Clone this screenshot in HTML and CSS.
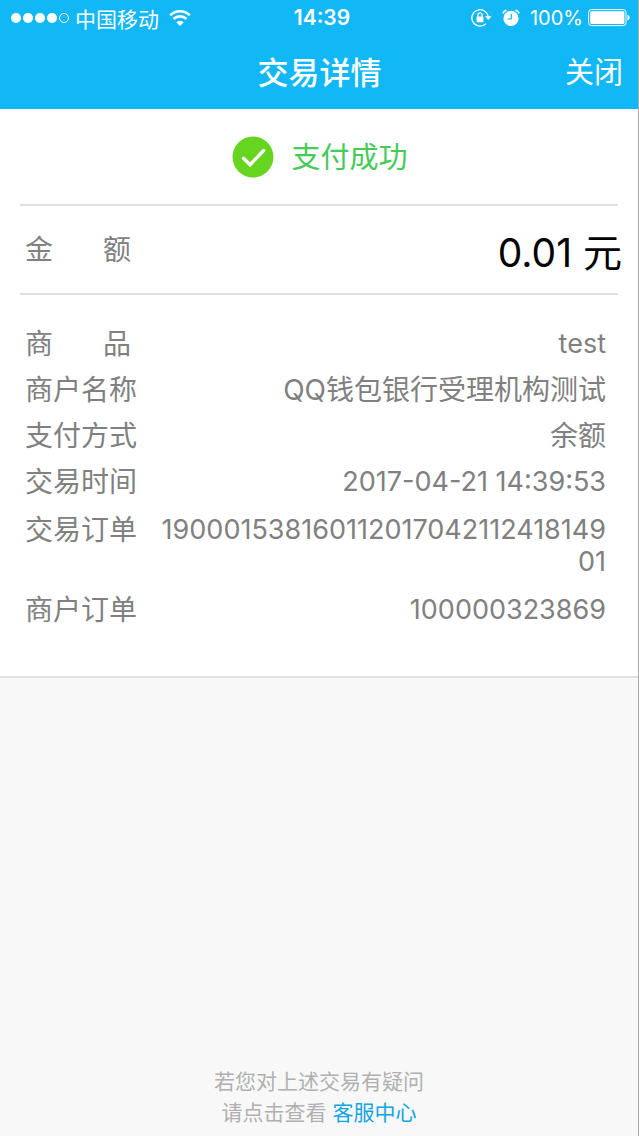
FILE: index.html
```html
<!doctype html>
<html lang="zh-CN">
  <head>
    <meta charset="UTF-8" />
    <meta name="viewport" content="width=device-width, initial-scale=1.0" />
    <title>交易详情</title>
    <link rel="stylesheet" href="styles.css">
  </head>
  <body>
    <header class="header">
      <!-- 状态栏 -->
      <div class="status-bar">
        <div class="status-left">
          <svg class="icon-signal" width="60" height="12" viewBox="0 0 60 12" fill="#fff">
            <circle cx="6" cy="6" r="5" />
            <circle cx="18" cy="6" r="5" />
            <circle cx="30" cy="6" r="5" />
            <circle cx="42" cy="6" r="5" />
            <circle cx="54" cy="6" r="4.5" fill="none" stroke="#fff" />
          </svg>
          <span class="carrier">中国移动</span>
          <svg class="icon-wifi" width="22" height="18" viewBox="0 0 22 18">
            <path d="M1.2 6.2a14 14 0 0 1 19.6 0M4.5 10a9.4 9.4 0 0 1 13 0" fill="none" stroke="#fff" stroke-width="2.6" />
            <path d="M7.3 13.2a5.3 5.3 0 0 1 7.4 0L11 17z" fill="#fff" />
          </svg>
        </div>
        <span class="status-time">14:39</span>
        <div class="status-right">
          <svg class="icon-lock" width="21" height="20" viewBox="0 0 21 20">
            <path d="M15 15.6A8.2 8.2 0 1 1 17.2 9" fill="none" stroke="#fff" stroke-width="1.3" />
            <path d="M14 8.2h6.5L17.3 12z" fill="#fff" />
            <rect x="5.6" y="8.4" width="6.8" height="5.8" rx=".6" fill="#fff" />
            <path d="M6.9 9V7a2.1 2.1 0 0 1 4.2 0V9" fill="none" stroke="#fff" stroke-width="1.3" />
          </svg>
          <svg class="icon-alarm" width="18" height="18" viewBox="0 0 18 18">
            <circle cx="9" cy="9.4" r="7.6" fill="#fff" />
            <path d="M.8 4.4A9 9 0 0 1 4.4 1M13.6 1A9 9 0 0 1 17.2 4.4" fill="none" stroke="#fff" stroke-width="1.6" />
            <path d="M9.3 4.8v5.2H5.4" fill="none" stroke="#12b7f5" stroke-width="1.2" />
          </svg>
          <span class="battery-text">100%</span>
          <svg class="icon-battery" width="42" height="18" viewBox="0 0 42 18">
            <rect x=".6" y=".6" width="37.4" height="16" rx="2.8" fill="none" stroke="#fff" stroke-width="1" />
            <rect x="2.2" y="2.2" width="34.2" height="12.8" rx="1.4" fill="#fff" />
            <path d="M39.4 5.8c3 .6 3 5 0 5.6z" fill="#fff" />
          </svg>
        </div>
      </div>

      <!-- 导航栏 -->
      <div class="nav-bar">
        <h1 class="nav-title">交易详情</h1>
        <button class="nav-close" type="button">关闭</button>
      </div>
    </header>

    <main class="detail">
      <!-- 支付结果 -->
      <div class="result">
        <svg class="result-icon" width="42" height="42" viewBox="0 0 42 42">
          <circle cx="21" cy="21" r="20.5" fill="#66d520" />
          <path d="M11.5 22.2l6.6 6.5L31.6 14.5" fill="none" stroke="#fff" stroke-width="3.4" stroke-linecap="round" />
        </svg>
        <p class="result-text">支付成功</p>
      </div>

      <!-- 金额 -->
      <dl class="amount">
        <dt class="label label-wide">金 额</dt>
        <dd class="amount-value">0.01 元</dd>
      </dl>

      <!-- 交易信息 -->
      <dl class="info">
        <div class="row">
          <dt class="label label-wide">商 品</dt>
          <dd class="value">test</dd>
        </div>
        <div class="row">
          <dt class="label">商户名称</dt>
          <dd class="value value-text">QQ钱包银行受理机构测试</dd>
        </div>
        <div class="row">
          <dt class="label">支付方式</dt>
          <dd class="value value-text">余额</dd>
        </div>
        <div class="row">
          <dt class="label">交易时间</dt>
          <dd class="value">2017-04-21 14:39:53</dd>
        </div>
        <div class="row row-order">
          <dt class="label">交易订单</dt>
          <dd class="value">19000153816011201704211241814901</dd>
        </div>
        <div class="row">
          <dt class="label">商户订单</dt>
          <dd class="value">100000323869</dd>
        </div>
      </dl>
    </main>

    <footer class="footer">
      <p>若您对上述交易有疑问</p>
      <p>请点击查看 <a class="footer-link" href="#">客服中心</a></p>
    </footer>
  </body>
</html>
```
FILE: styles.css
```css
* {
  margin: 0;
  padding: 0;
  box-sizing: border-box;
}

body {
  display: flex;
  flex-direction: column;
  min-height: 100vh;
  background: #f8f8f8;
  border-right: 1px solid #a9a9a9;
  font-family: Inter, "Noto Sans CJK SC", sans-serif;
  color: #808080;
}

/* 顶部 */
.header {
  background: #12b7f5;
  color: #fff;
}

.status-bar {
  display: grid;
  grid-template-columns: 1fr auto 1fr;
  align-items: center;
  height: 35px;
  padding: 0 8px 0 10px;
  font-size: 20px;
}

.status-left,
.status-right {
  display: flex;
  align-items: center;
}

.status-right {
  justify-content: flex-end;
}

.carrier {
  margin: 0 10px 0 5px;
  font-size: 21px;
}

.status-time {
  padding-left: 4px;
  font-size: 21px;
  font-weight: 600;
}

.icon-alarm {
  margin: 0 10px 0 10px;
}

.battery-text {
  margin-right: 5px;
}

.nav-bar {
  display: grid;
  grid-template-columns: 1fr auto 1fr;
  align-items: center;
  height: 74px;
  padding: 0 15px 4px 16px;
}

.nav-title {
  grid-column: 2;
  font-size: 31px;
  font-weight: 500;
}

.nav-close {
  justify-self: end;
  border: 0;
  background: none;
  color: #fff;
  font-family: inherit;
  font-size: 29px;
}

/* 交易内容 */
.detail {
  background: #fff;
  border-bottom: 2px solid #e0e0e0;
}

.result {
  display: flex;
  align-items: center;
  justify-content: center;
  gap: 17px;
  height: 95px;
  padding-left: 2px;
}

.result-text {
  padding-bottom: 3px;
  color: #44cb59;
  font-size: 29px;
}

.amount {
  display: flex;
  align-items: center;
  justify-content: space-between;
  height: 91px;
  margin: 0 20px;
  padding-left: 5px;
  border-top: 2px solid #e0e0e0;
  border-bottom: 2px solid #e0e0e0;
}

.label {
  flex: none;
  font-size: 28px;
  line-height: 32px;
}

.label-wide {
  width: 106px;
  text-align: justify;
  text-align-last: justify;
}

.amount-value {
  margin-right: -4px;
  color: #000;
  font-size: 39px;
}

.info {
  padding: 26px 32px 43px 25px;
}

.row {
  display: flex;
  justify-content: space-between;
  gap: 16px;
  padding: 7px 0;
}

.row-order {
  padding: 9px 0;
}

.value {
  font-size: 27px;
  line-height: 32px;
  text-align: right;
  word-break: break-all;
}

.value-text {
  font-size: 28px;
}

/* 底部提示 */
.footer {
  margin-top: auto;
  padding-bottom: 8px;
  color: #b0b0b0;
  font-size: 21px;
  line-height: 31px;
  text-align: center;
}

.footer-link {
  color: #12a5e0;
  text-decoration: none;
}
```
